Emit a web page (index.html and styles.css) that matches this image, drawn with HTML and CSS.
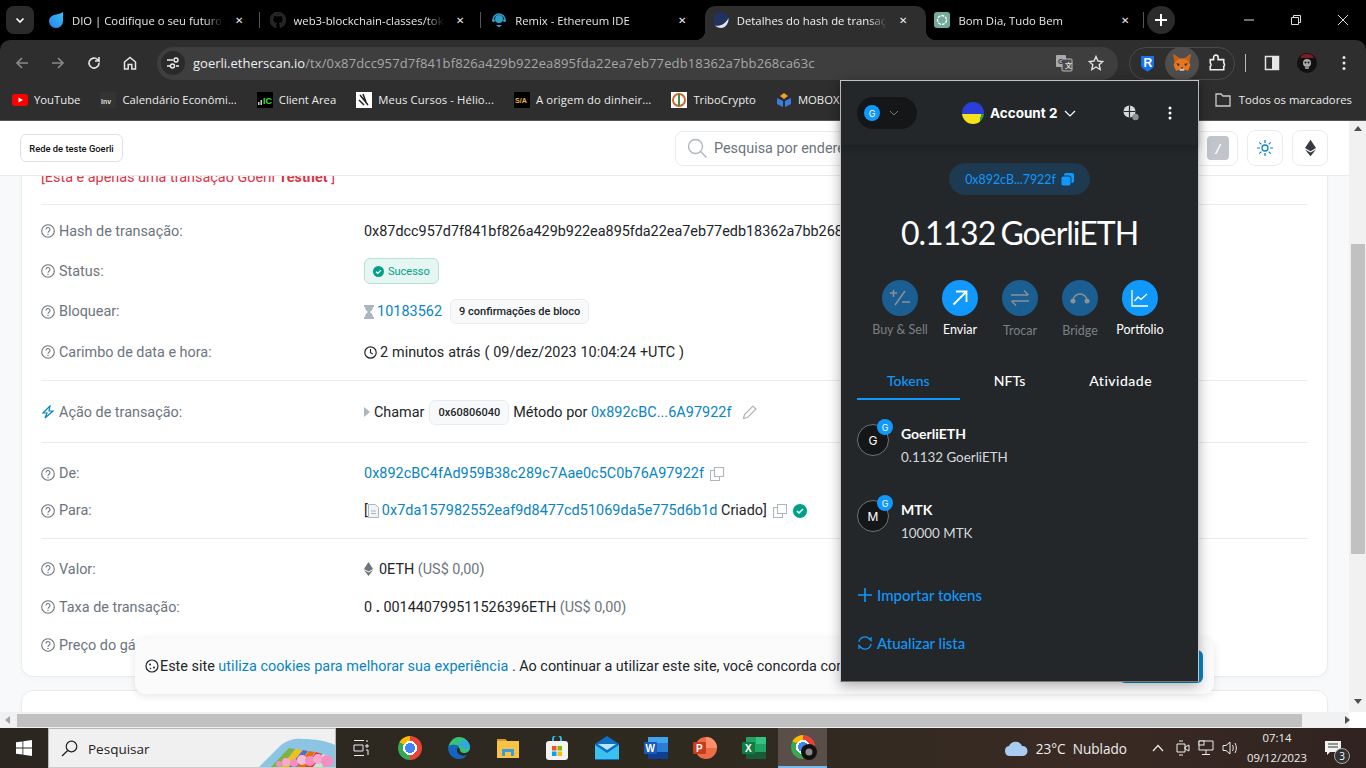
FILE: index.html
```html
<!DOCTYPE html>
<html lang="pt-BR">
<head>
<meta charset="utf-8">
<title>Detalhes do hash de transação</title>
<link rel="stylesheet" href="styles.css">
</head>
<body>
<div class="tabstrip">
  <div class="tabsearch"><svg width="12" height="12" viewBox="0 0 12 12"><path d="M2.5 4.5 6 8l3.5-3.5" fill="none" stroke="#fff" stroke-width="1.6"/></svg></div>
  <div class="tab">
    <svg class="fav" viewBox="0 0 16 16"><defs><linearGradient id="dio" x1="0" y1="1" x2="1" y2="0"><stop offset="0" stop-color="#2d7ff0"/><stop offset="1" stop-color="#35c3f0"/></linearGradient></defs><path d="M15 0v9a7 7 0 1 1-14 0c0-3 2-5 5-6 3-.6 6-1 9-3z" fill="url(#dio)"/></svg>
    <span class="tabtext">DIO | Codifique o seu futuro</span><span class="tabx">✕</span>
  </div>
  <div class="tab sep">
    <svg class="fav" viewBox="0 0 16 16"><path fill="#222" stroke="#444" stroke-width=".5" d="M8 0a8 8 0 0 0-2.5 15.6c.4.1.5-.2.5-.4v-1.4c-2.2.5-2.7-1-2.7-1-.4-.9-.9-1.200-.9-1.200-.7-.5.1-.5.1-.5.8.1 1.200.8 1.200.8.7 1.200 1.900.9 2.300.7.1-.5.300-.9.500-1.100-1.800-.2-3.600-.9-3.600-4 0-.9.300-1.600.8-2.100-.1-.2-.4-1 .1-2.100 0 0 .7-.2 2.200.8a7.600 7.600 0 0 1 4 0c1.500-1 2.200-.8 2.200-.8.4 1.100.2 1.900.1 2.100.5.6.8 1.300.8 2.100 0 3.100-1.900 3.700-3.700 3.900.3.300.6.800.6 1.500v2.200c0 .2.100.5.600.4A8 8 0 0 0 8 0z"/></svg>
    <span class="tabtext">web3-blockchain-classes/tok</span><span class="tabx">✕</span>
  </div>
  <div class="tab sep">
    <svg class="fav" viewBox="0 0 16 16"><circle cx="8" cy="7" r="4" fill="#2a9fc9"/><path d="M2 8a6 6 0 0 1 12 0" fill="none" stroke="#2a9fc9" stroke-width="1.600"/><path d="M5 13h6l-3 2.500z" fill="#2a9fc9"/><circle cx="2.500" cy="8.500" r="1.500" fill="#2a9fc9"/><circle cx="13.500" cy="8.500" r="1.500" fill="#2a9fc9"/></svg>
    <span class="tabtext">Remix - Ethereum IDE</span><span class="tabx">✕</span>
  </div>
  <div class="tab active">
    <svg class="fav" viewBox="0 0 16 16"><circle cx="8" cy="8" r="8" fill="#21325b"/><path d="M2 13.500c5 1 10-1 13.500-7.500.5 5-3 10-7.500 10-2.500 0-4.500-1-6-2.500z" fill="#dfe3ea"/></svg>
    <span class="tabtext">Detalhes do hash de transação</span><span class="tabx">✕</span>
  </div>
  <div class="tab">
    <svg class="fav" viewBox="0 0 16 16"><rect width="16" height="16" rx="3" fill="#74aa9c"/><circle cx="8" cy="8" r="4.500" fill="none" stroke="#fff" stroke-width="1.300" stroke-dasharray="3 1"/></svg>
    <span class="tabtext">Bom Dia, Tudo Bem</span><span class="tabx">✕</span>
  </div>
  <div class="tabdivider"></div>
  <div class="newtab"><svg width="14" height="14" viewBox="0 0 14 14"><path d="M7 1v12M1 7h12" stroke="#fff" stroke-width="2"/></svg></div>
  <div class="winctrls">
    <svg width="12" height="12" viewBox="0 0 12 12"><path d="M1 6h10" stroke="#ddd"/></svg>
    <svg width="12" height="12" viewBox="0 0 12 12"><path d="M1.500 3.500h7v7h-7zM3.500 3.500v-2h7v7h-2" fill="none" stroke="#ddd"/></svg>
    <svg width="12" height="12" viewBox="0 0 12 12"><path d="M1 1l10 10M11 1 1 11" stroke="#ddd"/></svg>
  </div>
</div>

<div class="toolbar">
  <svg class="navicon dim" viewBox="0 0 16 16"><path d="M14 8H3M8 3 3 8l5 5" fill="none" stroke="#8a8a8a" stroke-width="1.600"/></svg>
  <svg class="navicon dim" viewBox="0 0 16 16"><path d="M2 8h11M8 3l5 5-5 5" fill="none" stroke="#8a8a8a" stroke-width="1.600"/></svg>
  <svg class="navicon" viewBox="0 0 16 16"><path d="M13 8a5 5 0 1 1-1.500-3.500L13 6V2M13 6H9" fill="none" stroke="#e6e6e6" stroke-width="1.600"/></svg>
  <svg class="navicon" viewBox="0 0 16 16"><path d="M2.500 7 8 2.500 13.500 7v7h-3.700V9.500H6.200V14H2.500z" fill="none" stroke="#e6e6e6" stroke-width="1.500"/></svg>
  <div class="omnibox">
    <span class="siteinfo"><svg width="14" height="14" viewBox="0 0 14 14"><path d="M1 4h6M1 10h3M10 10h3" stroke="#eee" stroke-width="1.500"/><circle cx="10" cy="4" r="2" fill="none" stroke="#eee" stroke-width="1.400"/><circle cx="6.500" cy="10" r="2" fill="none" stroke="#eee" stroke-width="1.400"/></svg></span>
    <span class="url"><span class="urlhost">goerli.etherscan.io</span>/tx/0x87dcc957d7f841bf826a429b922ea895fda22ea7eb77edb18362a7bb268ca63c</span>
    <svg class="omniicon" viewBox="0 0 18 18"><rect x="1" y="1" width="10" height="12" rx="1" fill="#aaa"/><rect x="7" y="5" width="10" height="12" rx="1" fill="#4a4a4a" stroke="#bbb"/><text x="3" y="10" class="xlate">G</text><text x="10" y="14" class="xlate light">文</text></svg>
    <svg class="omniicon star" viewBox="0 0 16 16"><path d="M8 1.500 10 6l4.800.5-3.600 3.200 1 4.800L8 12l-4.200 2.500 1-4.800L1.200 6.500 6 6z" fill="none" stroke="#e0e0e0" stroke-width="1.400"/></svg>
  </div>
  <div class="extgroup">
    <span class="ext"><svg width="13" height="17" viewBox="0 0 14 18"><path d="M0 1h14v10c0 3-4 5-7 7-3-2-7-4-7-7z" fill="#1574ec"/><text x="2.600" y="12.500" class="bw">R</text></svg></span>
    <span class="ext fox"><svg width="20" height="20" viewBox="0 0 18 18"><path d="M1 1l6 4h4l6-4-1.500 7 1 3-2 5-3.500-1H7l-3.500 1-2-5 1-3z" fill="#e8761c"/><path d="M1 1l6 4-4.500 3zM17 1l-6 4 4.500 3z" fill="#c75f12"/><path d="M4 9l3 1-1.500 2zM14 9l-3 1 1.500 2z" fill="#233447"/><path d="M7 14h4v2H7z" fill="#d7c1b3"/><path d="M8 13h2v1H8z" fill="#233447"/></svg></span>
    <span class="ext"><svg width="18" height="18" viewBox="0 0 16 16"><path d="M2 5h3V3a2 2 0 0 1 4 0v2h5v3a2 2 0 0 1 0 3v3H2v-3a2 2 0 0 0 0-3z" fill="none" stroke="#eee" stroke-width="1.400"/></svg></span>
  </div>
  <span class="vsep"></span>
  <svg class="sidep" viewBox="0 0 16 16"><rect x="1.500" y="1.500" width="13" height="13" fill="none" stroke="#e6e6e6" stroke-width="1.500"/><rect x="8" y="2" width="6" height="12" fill="#e6e6e6"/></svg>
  <span class="avatar"><svg width="20" height="20" viewBox="0 0 20 20"><circle cx="10" cy="10" r="10" fill="#111"/><path d="M3 5a8 8 0 0 1 14 0z" fill="#7a1f1f"/><circle cx="10" cy="10" r="4" fill="#aaa"/><circle cx="8.500" cy="9.500" r="1" fill="#111"/><circle cx="11.500" cy="9.500" r="1" fill="#111"/><rect x="8" y="13" width="4" height="3" fill="#888"/></svg></span>
  <svg class="kebab" viewBox="0 0 4 16"><circle cx="2" cy="2.500" r="1.500" fill="#e6e6e6"/><circle cx="2" cy="8" r="1.500" fill="#e6e6e6"/><circle cx="2" cy="13.500" r="1.500" fill="#e6e6e6"/></svg>
</div>

<div class="bookmarks">
  <span class="bm"><svg class="bmi" viewBox="0 0 16 16"><rect y="2" width="16" height="12" rx="3" fill="#f00"/><path d="M6.500 5.500v5L11 8z" fill="#fff"/></svg>YouTube</span>
  <span class="bm"><svg class="bmi" viewBox="0 0 16 16"><rect width="16" height="16" fill="#333"/><text x="1" y="12" class="bmtxt">Inv</text></svg>Calendário Econômi...</span>
  <span class="bm"><svg class="bmi" viewBox="0 0 16 16"><rect width="16" height="16" fill="#000"/><path d="M1 13h1.500v-3H1zM3.500 13H5V8H3.500z" fill="#ccc"/><text x="6" y="12" class="bmtxt green">IC</text></svg>Client Area</span>
  <span class="bm wide"><svg class="bmi" viewBox="0 0 16 16"><rect width="16" height="16" fill="#fff"/><path d="M4 3l8 10M7 2l3 8M3 8l5 5" stroke="#222" stroke-width="1.500"/></svg>Meus Cursos - Hélio...</span>
  <span class="bm wide"><svg class="bmi" viewBox="0 0 16 16"><rect width="16" height="16" fill="#000"/><text x="1" y="11" class="bmtxt amber">S/A</text></svg>A origem do dinheir...</span>
  <span class="bm"><svg class="bmi" viewBox="0 0 16 16"><rect width="16" height="16" fill="#fff"/><circle cx="8" cy="8" r="6" fill="none" stroke="#d8632a" stroke-width="2"/><path d="M8 2v12" stroke="#3b8e4a" stroke-width="2"/></svg>TriboCrypto</span>
  <span class="bm"><svg class="bmi" viewBox="0 0 16 16"><path d="M8 1l4 3-4 3-4-3z" fill="#f0a030"/><path d="M1 6l6 3v6l-6-3zM15 6 9 9v6l6-3z" fill="#3a7de0"/></svg>MOBOX</span>
  <span class="bmall"><svg width="16" height="14" viewBox="0 0 16 14"><path d="M1 1h5l2 2h7v10H1z" fill="none" stroke="#ccc" stroke-width="1.300"/></svg>Todos os marcadores</span>
</div>

<div class="viewport">
  <div class="pagecol">
    <div class="page">
      <header class="sitehead">
        <span class="testnet">Rede de teste Goerli</span>
        <div class="sitesearch">
          <svg width="20" height="20" viewBox="0 0 20 20"><circle cx="8.500" cy="8.500" r="7" fill="none" stroke="#adb5bd" stroke-width="1.400"/><path d="m13.500 13.500 6 6" stroke="#adb5bd" stroke-width="1.400"/></svg>
          <span class="searchtext">Pesquisa por endereço / Txn Hash / Bloco / Token</span>
          <span class="slash">/</span>
        </div>
        <span class="iconbtn"><svg width="16" height="16" viewBox="0 0 16 16"><circle cx="8" cy="8" r="3" fill="none" stroke="#0784c3" stroke-width="1.300"/><path d="M8 0v3M8 13v3M0 8h3M13 8h3M2.300 2.300l2.100 2.100M11.600 11.600l2.100 2.100M2.300 13.700l2.100-2.100M11.600 4.400l2.100-2.100" stroke="#0784c3" stroke-width="1.200"/></svg></span>
        <span class="iconbtn"><svg width="11" height="18" viewBox="0 0 12 18"><path d="M6 0 0 9l6 3.500L12 9z" fill="#343a40"/><path d="M6 14 0 10.500 6 18l6-7.500z" fill="#343a40"/></svg></span>
      </header>
      <main class="pagebody">
        <section class="card">
          <div class="redline">[Esta é apenas uma transação Goerli <b>Testnet</b> ]</div>
          <div class="group g1">
            <div class="row"><div class="label"><svg class="help"><use href="#q"/></svg>Hash de transação:</div><div class="value">0x87dcc957d7f841bf826a429b922ea895fda22ea7eb77edb18362a7bb268ca63c</div></div>
            <div class="row"><div class="label"><svg class="help"><use href="#q"/></svg>Status:</div><div class="value"><span class="success"><svg width="11" height="11" viewBox="0 0 12 12"><circle cx="6" cy="6" r="6" fill="#00a186"/><path d="M3.300 6.200 5.200 8l3.500-3.500" fill="none" stroke="#fff" stroke-width="1.500"/></svg>Sucesso</span></div></div>
            <div class="row"><div class="label"><svg class="help"><use href="#q"/></svg>Bloquear:</div><div class="value"><svg class="inl" width="10" height="14" viewBox="0 0 10 14"><path d="M0 0h10v2H9c0 3-2 4-3 5 1 1 3 2 3 5h1v2H0v-2h1c0-3 2-4 3-5-1-1-3-2-3-5H0z" fill="#adb5bd"/></svg><a class="lnk">10183562</a><span class="pill blocks">9 confirmações de bloco</span></div></div>
            <div class="row"><div class="label"><svg class="help"><use href="#q"/></svg>Carimbo de data e hora:</div><div class="value"><svg class="inl" width="13" height="13" viewBox="0 0 13 13"><circle cx="6.500" cy="6.500" r="5.700" fill="none" stroke="#212529" stroke-width="1.200"/><path d="M6.500 3v3.700l2.300 1.300" fill="none" stroke="#212529" stroke-width="1.100"/></svg><span class="stamp">2 minutos atrás ( 09/dez/2023 10:04:24 +UTC )</span></div></div>
          </div>
          <div class="group g2">
            <div class="row"><div class="label"><svg class="help" viewBox="0 0 14 14"><path d="M9 1 2 8h4l-2 5 8-7H8z" fill="none" stroke="#0784c3" stroke-width="1.200"/></svg>Ação de transação:</div><div class="value"><svg class="inl tri" width="6" height="10" viewBox="0 0 6 10"><path d="M0 0l6 5-6 5z" fill="#adb5bd"/></svg>Chamar<span class="pill method">0x60806040</span>Método por&nbsp;<a class="lnk">0x892cBC...6A97922f</a><svg class="pencil" width="16" height="16" viewBox="0 0 16 16"><path d="M1.500 14.500l1-4L11 2l3 3-8.500 8.500z" fill="none" stroke="#adb5bd" stroke-width="1.200"/></svg></div></div>
          </div>
          <div class="group g3">
            <div class="row"><div class="label"><svg class="help"><use href="#q"/></svg>De:</div><div class="value"><a class="lnk">0x892cBC4fAd959B38c289c7Aae0c5C0b76A97922f</a><svg class="copy"><use href="#c"/></svg></div></div>
            <div class="row"><div class="label"><svg class="help"><use href="#q"/></svg>Para:</div><div class="value">[<svg class="inl doc" width="11" height="14" viewBox="0 0 11 14"><path d="M.5.500h7l3 3v10H.500z" fill="#f1f3f5" stroke="#adb5bd"/><path d="M3 7h5M3 9.500h5" stroke="#adb5bd"/></svg><a class="lnk">0x7da157982552eaf9d8477cd51069da5e775d6b1d</a>&nbsp;Criado]<svg class="copy"><use href="#c"/></svg><svg class="okdot" width="14" height="14" viewBox="0 0 14 14"><circle cx="7" cy="7" r="7" fill="#00a186"/><path d="M4 7.200 6 9l4-4" fill="none" stroke="#fff" stroke-width="1.600"/></svg></div></div>
          </div>
          <div class="group g4">
            <div class="row"><div class="label"><svg class="help"><use href="#q"/></svg>Valor:</div><div class="value"><svg class="inl eth" width="9" height="14" viewBox="0 0 9 14"><path d="M4.500 0 0 7l4.500 2.500L9 7zM4.500 10.500 0 8l4.500 6L9 8z" fill="#6c757d"/></svg>0ETH&nbsp;<span class="muted">(US$ 0,00)</span></div></div>
            <div class="row"><div class="label"><svg class="help"><use href="#q"/></svg>Taxa de transação:</div><div class="value"><span class="fee">0 <b>.</b> 001440799511526396ETH</span>&nbsp;<span class="muted">(US$ 0,00)</span></div></div>
            <div class="row"><div class="label"><svg class="help"><use href="#q"/></svg>Preço do gás:</div><div class="value"></div></div>
          </div>
        </section>
        <section class="card second"></section>
      </main>
      <div class="cookie">
        <svg width="14" height="14" viewBox="0 0 14 14"><circle cx="7" cy="7" r="6" fill="none" stroke="#212529" stroke-width="1.200"/><circle cx="5" cy="5.500" r="1" fill="#212529"/><circle cx="9" cy="8.500" r="1" fill="#212529"/><circle cx="5.500" cy="9.500" r=".8" fill="#212529"/></svg>
        <span class="cookietext">Este site <a class="lnk">utiliza cookies para melhorar sua experiência</a> . Ao continuar a utilizar este site, você concorda com os seus Termos de Serviço.</span>
        <span class="cookiebtn">Entendi</span>
      </div>
    </div>
    <div class="hscroll"><span class="arrow-l"></span><span class="hthumb"></span><span class="arrow-r"></span></div>
  </div>
  <div class="vscroll"><span class="arrow-u"></span><span class="vthumb"></span><span class="arrow-d"></span></div>
</div>

<footer class="taskbar">
  <span class="tb start"><svg width="16" height="16" viewBox="0 0 16 16"><path d="M0 2.300 6.500 1.400v6.200H0zM7.300 1.300 16 0v7.600H7.300zM0 8.400h6.500v6.200L0 13.700zM7.300 8.400H16V16l-8.700-1.300z" fill="#fff"/></svg></span>
  <div class="tbsearch">
    <svg width="17" height="17" viewBox="0 0 17 17"><circle cx="10.500" cy="6.500" r="5.300" fill="none" stroke="#222" stroke-width="1.200"/><path d="M6.700 10.500 1 16" stroke="#222" stroke-width="1.300"/></svg>
    <span class="tbsearchtext">Pesquisar</span>
    <svg class="tbart" width="76" height="39" viewBox="0 0 76 39"><path d="M0 39 22 17c8-6 16-7 22-6 12 0 24 2 32 6v22z" fill="#8cc4e4"/><path d="M12 39 30 20l6 1-14 18z" fill="#7cb342"/><path d="M22 39 37 21l6 1-12 17z" fill="#f4c20d"/><path d="M30 39 44 22l5 1-11 16z" fill="#5c6bc0"/><path d="M38 39 50 23l6 1-10 15z" fill="#ef6c00"/><path d="M46 39 57 24l6 2-8 13z" fill="#e53935"/><path d="M54 39 64 26l6 2-7 11z" fill="#c8e6c9"/><circle cx="20" cy="36" r="3" fill="#f48fc1"/><circle cx="27" cy="34" r="4" fill="#f8a8d0"/><circle cx="35" cy="35" r="4" fill="#f48fc1"/><circle cx="43" cy="32" r="5" fill="#f8bbd9"/><circle cx="51" cy="33" r="5" fill="#f48fc1"/><circle cx="59" cy="31" r="5" fill="#f8a8d0"/><circle cx="68" cy="33" r="6" fill="#f48fc1"/></svg>
  </div>
  <span class="tb"><svg width="16" height="16" viewBox="0 0 16 16"><path d="M1 .500h10M1 15.500h10M1 5h9v6H1zM13 1h2M13 5h2v2h-2zM13 10h2v5" fill="none" stroke="#eee"/></svg></span>
  <span class="tb"><span class="chrome"></span></span>
  <span class="tb"><svg width="24" height="24" viewBox="0 0 24 24"><path d="M12 1a11 11 0 0 1 11 11c0 3-3 5-6 5-2 0-4-1-4-3 0-4-9-6-12-1C2 6 6 1 12 1z" fill="#36c27c"/><path d="M1 12c0 6 5 11 11 11 3 0 6-1 8-4-6 2-10-1-10-5 0-2 1-3 2-4C8 8 1 8 1 12z" fill="#1565c0"/><path d="M12 10c2 0 5 1 6 3 3 0 5-1 5-1 0-3-1-6-4-8-3 0-7 2-7 6z" fill="#2fa8e0"/></svg></span>
  <span class="tb"><svg width="24" height="22" viewBox="0 0 24 22"><path d="M1 2h8l2 2h12v17H1z" fill="#f6c344"/><path d="M1 2h8l2 2H1z" fill="#d9972a"/><path d="M6 19v-7h12v7h-3v-4H9v4z" fill="#3d9ae0"/></svg></span>
  <span class="tb"><svg width="22" height="24" viewBox="0 0 22 24"><path d="M7 6V3a4 4 0 0 1 8 0v3" fill="none" stroke="#2fb5e8" stroke-width="2"/><rect y="5" width="22" height="19" rx="3" fill="#f3f3f3"/><rect x="6" y="10" width="4.500" height="4.500" fill="#f25022"/><rect x="11.500" y="10" width="4.500" height="4.500" fill="#7fba00"/><rect x="6" y="15.500" width="4.500" height="4.500" fill="#00a4ef"/><rect x="11.500" y="15.500" width="4.500" height="4.500" fill="#ffb900"/></svg></span>
  <span class="tb"><svg width="24" height="24" viewBox="0 0 24 24"><path d="M12 0 24 8v16H0V8z" fill="#0f6fc6"/><path d="M0 9l12 8 12-8v14H0z" fill="#3bc0f0"/><path d="M3 8h18L12 14z" fill="#b6e7fa"/></svg></span>
  <span class="tb"><svg width="24" height="24" viewBox="0 0 24 24"><rect x="4" y="1" width="20" height="22" rx="1" fill="#2b7cd3"/><rect x="4" y="1" width="20" height="6" fill="#41a5ee"/><rect x="4" y="16" width="20" height="7" fill="#103f91"/><rect x="0" y="6" width="13" height="12" rx="1" fill="#185abd"/><text x="1.500" y="16" class="ofc">W</text></svg></span>
  <span class="tb"><svg width="24" height="24" viewBox="0 0 24 24"><circle cx="13" cy="12" r="11" fill="#ed6c47"/><path d="M13 1a11 11 0 0 1 11 11H13z" fill="#ff8f6b"/><rect x="0" y="6" width="13" height="12" rx="1" fill="#c43e1c"/><text x="3" y="16" class="ofc">P</text></svg></span>
  <span class="tb"><svg width="24" height="24" viewBox="0 0 24 24"><rect x="4" y="1" width="20" height="22" rx="1" fill="#21a366"/><rect x="14" y="1" width="10" height="7" fill="#33c481"/><rect x="4" y="16" width="20" height="7" fill="#185c37"/><rect x="0" y="6" width="13" height="12" rx="1" fill="#107c41"/><text x="3" y="16" class="ofc">X</text></svg></span>
  <span class="tb tbactive"><span class="chrome"></span><svg class="chromebadge" width="16" height="16" viewBox="0 0 16 16"><circle cx="8" cy="8" r="8" fill="#111"/><circle cx="8" cy="8" r="3.500" fill="#888"/></svg></span>
  <span class="tbspace"></span>
  <svg class="cloud" width="24" height="16" viewBox="0 0 24 16"><path d="M6 16a5 5 0 0 1-1-9.900A7 7 0 0 1 18 6a5 5 0 0 1 1 10z" fill="#a8cdf0"/></svg>
  <span class="weather">23°C&nbsp; Nublado</span>
  <svg class="tray chev" width="12" height="8" viewBox="0 0 12 8"><path d="M1 7l5-5.500L11 7" fill="none" stroke="#eee" stroke-width="1.200"/></svg>
  <svg class="tray" width="14" height="16" viewBox="0 0 14 16"><path d="M1 4h8v8H1zM9 7l4-2v6l-4-2zM3 1h4M3 15h4" fill="none" stroke="#eee"/></svg>
  <svg class="tray" width="16" height="16" viewBox="0 0 16 16"><path d="M1 1h14v9H1zM8 10v4M4 14.500h8" fill="none" stroke="#eee"/><rect x="1" y="1" width="5" height="4" fill="#2b2620" stroke="#eee"/></svg>
  <svg class="tray" width="16" height="16" viewBox="0 0 16 16"><path d="M1 5.500h3L8 2v12l-4-3.500H1zM10.500 5c1 2 1 4 0 6M13 3c1.800 3 1.800 7 0 10" fill="none" stroke="#eee"/></svg>
  <div class="clock"><span>07:14</span><span>09/12/2023</span></div>
  <span class="notif"><svg width="16" height="14" viewBox="0 0 16 14"><path d="M0 0h16v11H5l-3 3v-3H0z" fill="#f2f2f2"/><path d="M3 3h10M3 6h10" stroke="#333"/></svg><span class="notifcount">3</span></span>
</footer>

<aside class="mm">
  <div class="mmhead">
    <span class="netpill"><span class="gcircle small">G</span><svg width="10" height="6" viewBox="0 0 10 6"><path d="M1 1l4 4 4-4" fill="none" stroke="#777"/></svg></span>
    <span class="acct"><span class="flagavatar"></span><b class="acctname">Account 2</b><svg width="12" height="7" viewBox="0 0 12 7"><path d="M1 1l5 5 5-5" fill="none" stroke="#fff" stroke-width="1.200"/></svg></span>
    <svg class="mmglobe" width="16" height="16" viewBox="0 0 16 16"><circle cx="6.500" cy="6.500" r="6" fill="#d6d9dc"/><path d="M6.500 .5v12M.5 6.500h12" stroke="#24272a" stroke-width="1.200"/><circle cx="12.500" cy="12" r="3.200" fill="#8b9096"/></svg>
    <svg class="mmmenu" width="4" height="14" viewBox="0 0 4 14"><circle cx="2" cy="2" r="1.500" fill="#fff"/><circle cx="2" cy="7" r="1.500" fill="#fff"/><circle cx="2" cy="12" r="1.500" fill="#fff"/></svg>
  </div>
  <div class="addr"><span>0x892cB...7922f</span><svg width="13" height="13" viewBox="0 0 13 13"><rect x="3" y="0" width="10" height="10" rx="2" fill="#1098fc"/><rect y="3" width="10" height="10" rx="2" fill="#1098fc" stroke="#1f3a52"/></svg></div>
  <div class="balance">0.1132 GoerliETH</div>
  <div class="actions">
    <div class="act off"><span class="actc"><svg width="22" height="18" viewBox="0 0 22 18"><path d="M1 4h7M4.500 1v7M21 13h-8M16 2 6 16" fill="none" stroke="#8a9197" stroke-width="1.500"/></svg></span><span>Buy &amp; Sell</span></div>
    <div class="act"><span class="actc"><svg width="16" height="16" viewBox="0 0 16 16"><path d="M1.500 14.500 14 2M4 1.500h10.500V12" fill="none" stroke="#fff" stroke-width="1.800"/></svg></span><span>Enviar</span></div>
    <div class="act off low"><span class="actc"><svg width="20" height="18" viewBox="0 0 20 18"><path d="M1 6h17M14 1.500l4.500 4.500M19 12H2M6 16.500 1.500 12" fill="none" stroke="#8a9197" stroke-width="1.400"/></svg></span><span>Trocar</span></div>
    <div class="act off low"><span class="actc"><svg width="20" height="12" viewBox="0 0 20 12"><path d="M3 9a7 7 0 0 1 14 0" fill="none" stroke="#8a9197" stroke-width="1.500"/><circle cx="3" cy="9" r="2.500" fill="#8a9197"/><circle cx="17" cy="9" r="2.500" fill="#8a9197"/></svg></span><span>Bridge</span></div>
    <div class="act"><span class="actc"><svg width="18" height="18" viewBox="0 0 18 18"><path d="M1 1v16h16M3.500 12l3.500-4 3 2.500L16 5" fill="none" stroke="#fff" stroke-width="1.300"/></svg></span><span>Portfolio</span></div>
  </div>
  <div class="mmtabs"><span class="mmtab on">Tokens</span><span class="mmtab">NFTs</span><span class="mmtab">Atividade</span></div>
  <div class="tokens">
    <div class="token"><span class="tokav">G<span class="gcircle badge">G</span></span><div><div class="tokname">GoerliETH</div><div class="toksub">0.1132 GoerliETH</div></div></div>
    <div class="token"><span class="tokav">M<span class="gcircle badge">G</span></span><div><div class="tokname">MTK</div><div class="toksub">10000 MTK</div></div></div>
  </div>
  <div class="mmlink first"><svg width="14" height="14" viewBox="0 0 14 14"><path d="M7 0v14M0 7h14" stroke="#1098fc" stroke-width="1.600"/></svg>Importar tokens</div>
  <div class="mmlink"><svg width="14" height="14" viewBox="0 0 14 14"><path d="M1 6a6 6 0 0 1 10.500-3L13 4.500V1M13 8a6 6 0 0 1-10.500 3L1 9.500V13" fill="none" stroke="#1098fc" stroke-width="1.300"/></svg>Atualizar lista</div>
</aside>

<svg class="defs" width="0" height="0">
  <symbol id="q" viewBox="0 0 14 14"><circle cx="7" cy="7" r="6.300" fill="none" stroke="#6c757d" stroke-width="1.100"/><path d="M5 5.500a2 2 0 1 1 3 1.700c-.7.500-1 .8-1 1.500" fill="none" stroke="#6c757d" stroke-width="1.100"/><circle cx="7" cy="10.500" r=".7" fill="#6c757d"/></symbol>
  <symbol id="c" viewBox="0 0 14 14"><path d="M4.500.5h9v9h-9z" fill="none" stroke="#adb5bd" stroke-width="1.100"/><path d="M4 3.500H.5v10h9V10" fill="none" stroke="#adb5bd" stroke-width="1.100"/></symbol>
</svg>
</body>
</html>
```
FILE: styles.css
```css
* { box-sizing: border-box; }
html, body { margin: 0; height: 768px; overflow: hidden; }
body { position: relative; width: 1366px; display: flex; flex-direction: column; font-family: "Roboto", sans-serif; background: #000; }
a { text-decoration: none; }
.defs { position: absolute; }

/* Tab strip */
.tabstrip { height: 40px; flex: none; display: flex; align-items: flex-end; background: #000; position: relative; font-family: "Open Sans", sans-serif; color: #e8e8e8; font-size: 11.3px; padding-left: 40px; }
.tabsearch { position: absolute; left: 6px; top: 6px; width: 28px; height: 28px; border-radius: 8px; background: #2b2b2b; display: flex; align-items: center; justify-content: center; }
.tab { width: 221.6px; height: 34px; flex: none; display: flex; align-items: center; gap: 8px; padding: 0 15px 6px 8px; position: relative; }
.tab.sep::before { content: ""; position: absolute; left: -3px; top: 6px; height: 16px; width: 1px; background: #555; }
.tab.active { background: #2e2e2e; border-radius: 10px 10px 0 0; color: #f2f2f2; }
.tab.active::before, .tab.active::after { content: ""; position: absolute; bottom: 0; width: 10px; height: 10px; }
.tab.active::before { left: -10px; background: radial-gradient(circle at 0 0, transparent 10px, #2e2e2e 10.5px); }
.tab.active::after { right: -10px; background: radial-gradient(circle at 100% 0, transparent 10px, #2e2e2e 10.5px); }
.fav { width: 16px; height: 16px; flex: none; }
.tabtext { flex: 1; overflow: hidden; white-space: nowrap; min-width: 0; -webkit-mask-image: linear-gradient(90deg, #000 88%, transparent); mask-image: linear-gradient(90deg, #000 88%, transparent); }
.tabx { font-size: 10px; width: 16px; text-align: center; flex: none; color: #eee; }
.tabdivider { width: 1px; height: 16px; background: #555; align-self: center; margin: 0 0 0 -5px; }
.newtab { width: 28px; height: 28px; border-radius: 50%; background: #2b2b2b; display: flex; align-items: center; justify-content: center; margin: 0 0 0 3px; align-self: center; }
.winctrls { display: flex; align-items: center; gap: 35px; margin-left: auto; padding-right: 17px; align-self: center; }

/* Toolbar */
.toolbar { height: 41px; flex: none; background: #2e2e2e; border-radius: 10px 10px 0 0; display: flex; align-items: center; padding: 5px 10px 0 14px; position: relative; }
.navicon { width: 16px; height: 16px; margin-right: 20px; flex: none; }
.navicon:nth-child(4) { margin-right: 19px; }
.omnibox { width: 961px; height: 33px; border-radius: 17px; background: #3e3e3e; display: flex; align-items: center; padding: 0 14px 0 4px; flex: none; font-family: "Open Sans", sans-serif; font-size: 13px; color: #a8a8a8; }
.siteinfo { width: 24px; height: 24px; border-radius: 50%; background: #2a2a2a; display: flex; align-items: center; justify-content: center; margin-right: 8px; flex: none; }
.url { flex: 1; white-space: nowrap; overflow: hidden; letter-spacing: .13px; }
.urlhost { color: #f0f0f0; letter-spacing: 0; }
.omniicon { width: 18px; height: 18px; margin-left: 15px; flex: none; }
.xlate { font-family: "Liberation Sans", "Noto Sans CJK SC", sans-serif; font-size: 7px; font-weight: 700; fill: #333; }
.xlate.light { fill: #ddd; }
.star { width: 16px; height: 16px; }
.extgroup { width: 106px; height: 33px; border: 1px solid #4a4a4a; border-radius: 17px; display: flex; align-items: center; justify-content: space-between; margin-left: 11px; flex: none; }
.ext { width: 34px; height: 33px; display: flex; align-items: center; justify-content: center; border-radius: 17px; }
.ext.fox { background: #4e4e4e; }
.bw { font-family: "Liberation Sans", sans-serif; font-size: 13px; font-weight: 700; fill: #fff; }
.vsep { width: 1px; height: 18px; background: #bbb; margin: 0 18px 0 10px; flex: none; }
.sidep { width: 16px; height: 16px; flex: none; }
.avatar { margin-left: 17px; display: flex; flex: none; }
.kebab { width: 4px; height: 16px; margin-left: 25px; flex: none; }

/* Bookmarks */
.bookmarks { height: 40px; flex: none; background: #2e2e2e; border-bottom: 1px solid #555; display: flex; align-items: center; padding: 0 14px 2px 12px; font-family: "Open Sans", sans-serif; font-size: 11.3px; color: #ececec; gap: 20px; white-space: nowrap; }
.bm { display: flex; align-items: center; gap: 6px; }
.bm.wide { letter-spacing: .1px; }
.bmi { width: 16px; height: 16px; flex: none; }
.bmtxt { font-family: "Liberation Sans", sans-serif; font-size: 7px; font-weight: 700; fill: #ddd; }
.bmtxt.green { fill: #39e639; font-size: 9px; }
.bmtxt.amber { fill: #e8b54a; }
.bmall { margin-left: auto; display: flex; align-items: center; gap: 8px; }

/* Page */
.viewport { height: 607px; flex: none; display: flex; background: #fff; }
.pagecol { width: 1349px; display: flex; flex-direction: column; flex: none; }
.page { height: 591px; position: relative; overflow: hidden; background: #f8f9fa; }
.sitehead { height: 55px; background: #fff; border-bottom: 1px solid #e9ecef; display: flex; align-items: center; padding: 0 21px 0 20px; position: relative; z-index: 1; }
.testnet { height: 28px; width: 103px; border: 1px solid #dee2e6; border-radius: 6px; font-size: 9.4px; font-weight: 500; color: #111; display: flex; align-items: center; justify-content: center; white-space: nowrap; background: #fff; }
.sitesearch { width: 563px; height: 35px; border: 1px solid #e9ecef; border-radius: 8px; margin-left: auto; display: flex; align-items: center; padding: 0 8px 0 11px; gap: 7px; font-size: 14.4px; color: #6c757d; }
.searchtext { flex: 1; white-space: nowrap; overflow: hidden; }
.slash { width: 22px; height: 24px; background: #bfc5cb; color: #fff; font-weight: 700; font-size: 13px; border-radius: 4px; display: flex; align-items: center; justify-content: center; font-style: italic; }
.iconbtn { width: 36px; height: 36px; border: 1px solid #e9ecef; border-radius: 8px; margin-left: 9px; display: flex; align-items: center; justify-content: center; background: #fff; flex: none; }
.pagebody { padding: 0 21px; margin-top: -10px; display: flex; flex-direction: column; gap: 13px; }
.card { background: #fff; border: 1px solid #e9ecef; border-radius: 0 0 12px 12px; padding: 0 19px; height: 511px; box-shadow: 0 2px 6px rgba(0,0,0,.02); border-top: 0; flex: none; }
.card.second { border-top: 1px solid #e9ecef; border-radius: 12px; height: 200px; }
.redline { height: 39px; font-size: 14.4px; line-height: 24px; color: #dc3545; border-bottom: 1px solid #e9ecef; }
.group { border-bottom: 1px solid #e9ecef; }
.group:last-child { border-bottom: 0; }
.g1 { padding: 6px 0 8px; }
.g1 .row { height: 40.3px; }
.g2 { padding: 11px 0 10px; }
.g2 .row { height: 40px; }
.g3 { padding: 12px 0 9px; }
.g3 .row { height: 37px; }
.g4 { padding: 11px 0 0; }
.g4 .row { height: 38px; }
.row { display: flex; align-items: center; font-size: 14.4px; white-space: nowrap; }
.label { width: 323px; flex: none; color: #6c757d; display: flex; align-items: center; gap: 4px; }
.help { width: 14px; height: 14px; flex: none; }
.value { color: #212529; display: flex; align-items: center; flex: 1; overflow: hidden; }
.lnk { color: #0784c3; letter-spacing: .05px; }
.inl { margin-right: 3px; flex: none; }
.tri { margin-right: 4px; }
.doc { margin: 0 3px 0 0; }
.eth { margin-right: 6px; }
.muted { color: #6c757d; }
.fee { white-space: pre; }
.stamp { word-spacing: .35px; }
.success { display: inline-flex; align-items: center; gap: 4px; height: 26px; padding: 0 8px; background: #e6f6f3; border: 1px solid #b3e3da; border-radius: 6px; color: #00a186; font-size: 11px; font-weight: 400; }
.pill { display: inline-flex; align-items: center; height: 25px; border: 1px solid #e9ecef; border-radius: 6px; background: #f8f9fa; font-size: 11px; font-weight: 500; color: #212529; padding: 0 8px; }
.blocks { margin-left: 8px; }
.method { margin: 0 4px 0 5px; padding: 0 8px; }
.pencil { margin-left: 11px; }
.copy { width: 14px; height: 14px; margin-left: 6px; flex: none; }
.okdot { margin-left: 6px; flex: none; }

.cookie { position: absolute; left: 135px; top: 517px; width: 1079px; height: 56px; background: #fbfbfb; border-radius: 10px; box-shadow: 0 2px 8px rgba(0,0,0,.1); display: flex; align-items: center; padding: 0 11px 0 10px; font-size: 14.4px; color: #212529; z-index: 2; white-space: nowrap; }
.cookietext { flex: 1; overflow: hidden; margin-left: 1px; }
.cookiebtn { width: 84px; height: 33px; margin-top: 1px; background: #0784c3; color: #fff; border-radius: 6px; display: flex; align-items: center; justify-content: center; flex: none; font-size: 13px; }

/* Scrollbars */
.hscroll { height: 16px; background: #f1f1f1; display: flex; align-items: center; padding: 1px 0; flex: none; }
.hthumb { width: 1285px; height: 13px; background: #c1c1c1; margin: 0 8px 0 7px; flex: none; }
.arrow-l { margin-left: 5px; border: 4px solid transparent; border-left: 0; border-right: 5px solid #a3a3a3; flex: none; }
.arrow-r { margin-left: 35px; border: 4px solid transparent; border-right: 0; border-left: 5px solid #505050; flex: none; }
.vscroll { width: 17px; height: 591px; background: #f1f1f1; display: flex; flex-direction: column; align-items: center; flex: none; }
.vthumb { width: 14px; height: 310px; background: #c1c1c1; margin-top: 113px; flex: none; }
.arrow-u { margin-top: 5px; border: 4px solid transparent; border-top: 0; border-bottom: 5px solid #505050; flex: none; }
.arrow-d { margin-top: 145px; border: 4px solid transparent; border-bottom: 0; border-top: 5px solid #505050; flex: none; }

/* Taskbar */
.taskbar { height: 40px; flex: none; background: linear-gradient(90deg, #2b2620 0%, #2e2a20 50%, #3a2a24 80%, #30231f 100%); display: flex; align-items: center; color: #eee; font-family: "Open Sans", sans-serif; position: relative; }
.tb { width: 49.2px; height: 40px; display: flex; align-items: center; justify-content: center; flex: none; position: relative; }
.start { width: 48px; }
.tbsearch { width: 288px; height: 40px; background: #f0f0f0; border: 1px solid #b8b8b8; border-bottom-color: #ccc; display: flex; align-items: center; padding-left: 12px; gap: 10px; position: relative; overflow: hidden; color: #222; font-size: 13.5px; }
.tbsearchtext { padding-top: 1px; }
.tbart { position: absolute; right: 0; bottom: 0; }
.ofc { font-family: "Liberation Sans", sans-serif; font-size: 10px; font-weight: 700; fill: #fff; }
.chrome { width: 24px; height: 24px; border-radius: 50%; background: radial-gradient(circle, #4285f4 0 5px, #fff 5px 7px, transparent 7px), conic-gradient(from 30deg, #ea4335 0 150deg, #34a853 150deg 270deg, #fbbc05 270deg 330deg, #ea4335 330deg); display: block; flex: none; }
.tbactive { background: #5a4e48; border-bottom: 2px solid #76b9ed; margin-left: -.5px; }
.chromebadge { position: absolute; right: 10px; bottom: 6px; }
.tbspace { flex: 1; }
.cloud { margin-right: 8px; flex: none; }
.weather { font-size: 13.6px; margin-right: 25px; white-space: nowrap; }
.tray { margin-right: 8px; flex: none; }
.chev { margin-right: 12px; }
.clock { display: flex; flex-direction: column; align-items: center; font-size: 11.3px; line-height: 20px; margin: 0 18px 0 1px; }
.notif { position: relative; display: flex; margin-right: 25px; }
.notifcount { position: absolute; right: -9px; bottom: -9px; width: 16px; height: 16px; border-radius: 50%; background: #333; border: 1px solid #aaa; font-size: 10px; text-align: center; line-height: 14px; color: #fff; }

/* MetaMask popup */
.mm { position: absolute; left: 840px; top: 80px; width: 359px; height: 602px; background: #24272a; border: 1px solid #c9c9c9; border-bottom-color: #777; color: #fff; font-family: "Lato", sans-serif; z-index: 5; box-shadow: 0 4px 12px rgba(0,0,0,.3); display: flex; flex-direction: column; }
.mmhead { height: 64px; flex: none; display: flex; align-items: center; padding: 0 26px 0 16px; background: #24272a; box-shadow: 0 3px 8px rgba(0,0,0,.22); }
.netpill { width: 60px; height: 32px; border-radius: 16px; background: #141618; display: flex; align-items: center; padding-left: 7px; gap: 9px; flex: none; }
.gcircle { background: #1098fc; color: #fff; border-radius: 50%; display: flex; align-items: center; justify-content: center; font-family: "Inter", sans-serif; }
.gcircle.small { width: 16px; height: 16px; font-size: 9px; }
.acct { display: flex; align-items: center; margin-left: 45px; flex: none; }
.flagavatar { width: 22px; height: 22px; border-radius: 50%; background: linear-gradient(100deg, transparent 0 80%, #2fa04a 80%) 0 100% / 100% 45% no-repeat, linear-gradient(180deg, #2a3fd8 0 55%, #f5e21b 55%); margin-right: 6px; }
.acctname { font-size: 13.5px; font-weight: 700; margin-right: 7px; font-family: "Inter", sans-serif; }
.mmglobe { margin-left: 47px; flex: none; }
.mmmenu { margin-left: auto; flex: none; }
.addr { align-self: center; margin-top: 18px; width: 141px; height: 32px; border-radius: 16px; background: #1e3a50; color: #1098fc; font-size: 12.4px; display: flex; align-items: center; justify-content: center; gap: 5px; }
.balance { text-align: center; font-size: 32px; margin-top: 16px; line-height: 44px; height: 44px; font-weight: 400; letter-spacing: -1px; word-spacing: -2px; }
.actions { display: flex; padding-left: 29px; margin-top: 25px; }
.act { width: 60px; display: flex; flex-direction: column; align-items: center; gap: 6px; font-size: 12.5px; flex: none; white-space: nowrap; }
.actc { width: 36px; height: 36px; border-radius: 50%; background: #1098fc; display: flex; align-items: center; justify-content: center; }
.act.off { color: #7b8085; }
.act.off .actc { background: #1a5e92; }
.act.low { gap: 7px; }
.mmtabs { display: flex; margin: 29px 16px 0; height: 33px; flex: none; font-size: 14px; }
.mmtab { width: 103px; text-align: center; line-height: 28px; font-weight: 500; }
.mmtab:nth-child(2) { width: 100px; }
.mmtab:nth-child(3) { width: 123px; letter-spacing: .5px; }
.mmtab.on { color: #1098fc; border-bottom: 2px solid #1098fc; }
.tokens { padding: 24px 16px 0; display: flex; flex-direction: column; gap: 44px; }
.token { display: flex; gap: 12px; height: 32px; }
.tokav { width: 32px; height: 32px; border-radius: 50%; background: #141618; border: 1px solid #6a737d; display: flex; align-items: center; justify-content: center; position: relative; font-size: 12px; font-family: "Inter", sans-serif; flex: none; }
.badge { position: absolute; right: -5px; top: -6px; width: 16px; height: 16px; font-size: 9px; }
.tokname { font-size: 14px; font-weight: 700; line-height: 20px; }
.toksub { font-size: 13.4px; color: #d6d9dc; line-height: 20px; margin-top: 3px; }
.mmlink { display: flex; align-items: center; gap: 5px; padding-left: 17px; color: #1098fc; font-size: 15px; font-weight: 500; margin-top: 30px; }
.mmlink.first { margin-top: 54px; }
```
